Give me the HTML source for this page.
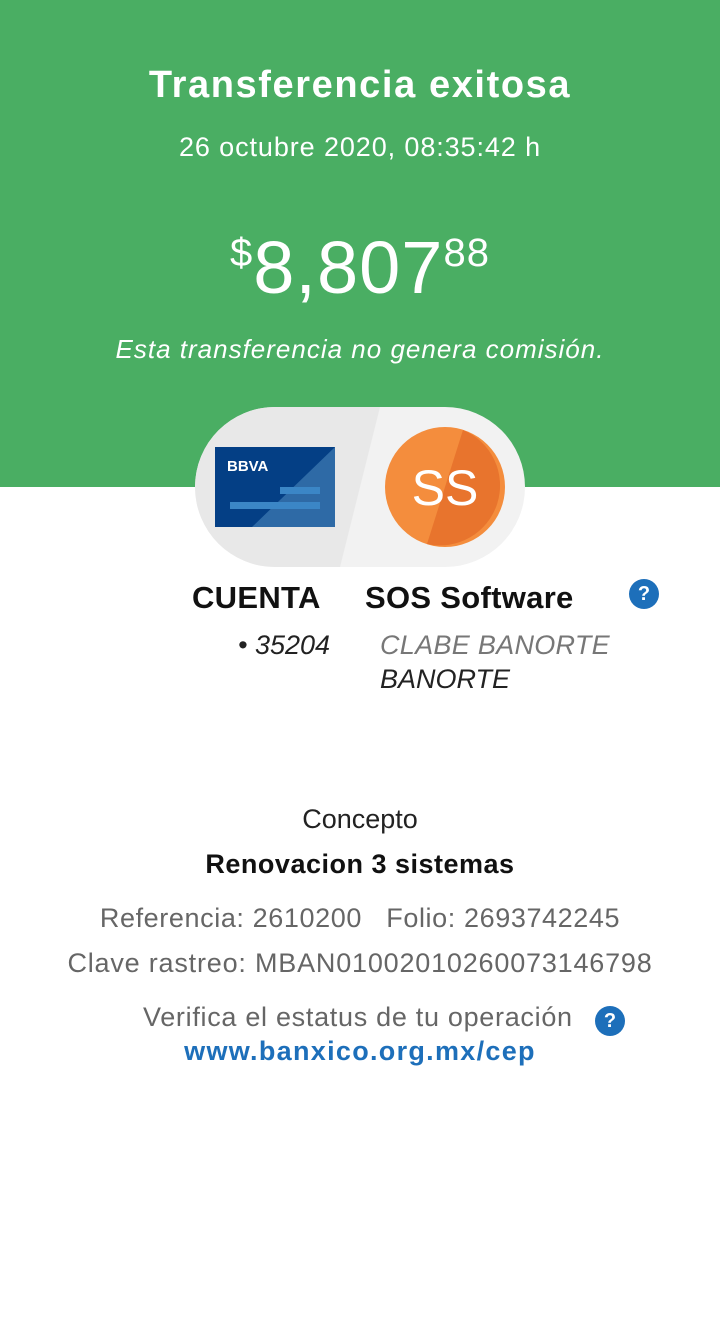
<!DOCTYPE html>
<html><head><meta charset="utf-8"><style>
body{margin:0;width:720px;height:1340px;background:#fff;font-family:"Liberation Sans",sans-serif;position:relative;overflow:hidden}
.green{position:absolute;left:0;top:0;width:720px;height:487px;background:#4aae63}
.t{position:absolute;left:0;width:720px;text-align:center;white-space:nowrap}
.abs{position:absolute;white-space:nowrap}
.q{position:absolute;width:30px;height:30px;border-radius:50%;background:#1d6fba;color:#fff;font-weight:bold;font-size:20px;text-align:center;line-height:30px}
</style></head><body>
<div class="green"></div>
<div class="t" style="top:64px;color:#fff;font-size:38px;font-weight:bold;letter-spacing:1.6px">Transferencia exitosa</div>
<div class="t" style="top:132px;color:#fff;font-size:27px;letter-spacing:0.9px">26 octubre 2020, 08:35:42 h</div>
<div class="t" style="top:228px;color:#fff;font-size:74px;line-height:80px;letter-spacing:1px"><span style="font-size:40px;vertical-align:top;line-height:50px">$</span>8,807<span style="font-size:40px;vertical-align:top;line-height:50px">88</span></div>
<div class="t" style="top:334px;color:#fff;font-size:26px;font-style:italic;letter-spacing:1px">Esta transferencia no genera comisión.</div>
<svg class="abs" style="left:195px;top:407px" width="330" height="160">
<defs><clipPath id="c"><rect x="0" y="0" width="330" height="160" rx="80"/></clipPath></defs>
<g clip-path="url(#c)">
<rect width="330" height="160" fill="#f2f2f2"/>
<polygon points="0,0 185,0 145,160 0,160" fill="#e8e8e8"/>
</g>
<rect x="20" y="40" width="120" height="80" fill="#043f85"/>
<polygon points="140,40 140,120 57,120" fill="#2e6aa6"/>
<rect x="85" y="80" width="40" height="7" fill="#3b86c6"/>
<rect x="35" y="95" width="90" height="7" fill="#3b86c6"/>
<text x="32" y="64" fill="#fff" font-size="15" font-family="Liberation Sans" font-weight="bold">BBVA</text>
<circle cx="250" cy="80" r="60" fill="#f48d3d"/>
<path d="M268,23 A60,60 0 0 1 232,137 Z" fill="#e8742d"/>
<text x="250" y="98" fill="#fff" font-size="50" text-anchor="middle" font-family="Liberation Sans">SS</text>
</svg>
<div class="abs" style="left:192px;top:580px;font-size:31px;color:#111;font-weight:bold;letter-spacing:0.3px">CUENTA</div>
<div class="abs" style="left:365px;top:580px;font-size:31px;color:#111;font-weight:bold;letter-spacing:0.3px">SOS Software</div>
<div class="q" style="left:629px;top:579px">?</div>
<div class="abs" style="left:238px;top:630px;font-size:27px;font-style:italic;color:#222">• 35204</div>
<div class="abs" style="left:380px;top:630px;font-size:27px;font-style:italic;color:#777;letter-spacing:0.3px">CLABE BANORTE</div>
<div class="abs" style="left:380px;top:664px;font-size:27px;font-style:italic;color:#222">BANORTE</div>
<div class="t" style="top:804px;font-size:27px;color:#222">Concepto</div>
<div class="t" style="top:849px;font-size:27px;color:#111;font-weight:bold;letter-spacing:0.5px">Renovacion 3 sistemas</div>
<div class="t" style="top:903px;font-size:27px;color:#666;letter-spacing:0.6px">Referencia: 2610200&nbsp;&nbsp; Folio: 2693742245</div>
<div class="t" style="top:948px;font-size:27px;color:#666;letter-spacing:0.8px">Clave rastreo: MBAN01002010260073146798</div>
<div class="abs" style="left:143px;top:1002px;font-size:27px;color:#666;letter-spacing:0.7px">Verifica el estatus de tu operación</div>
<div class="q" style="left:595px;top:1006px">?</div>
<div class="t" style="top:1036px;font-size:27px;font-weight:bold;color:#1d6fba;letter-spacing:1.3px">www.banxico.org.mx/cep</div>
</body></html>
